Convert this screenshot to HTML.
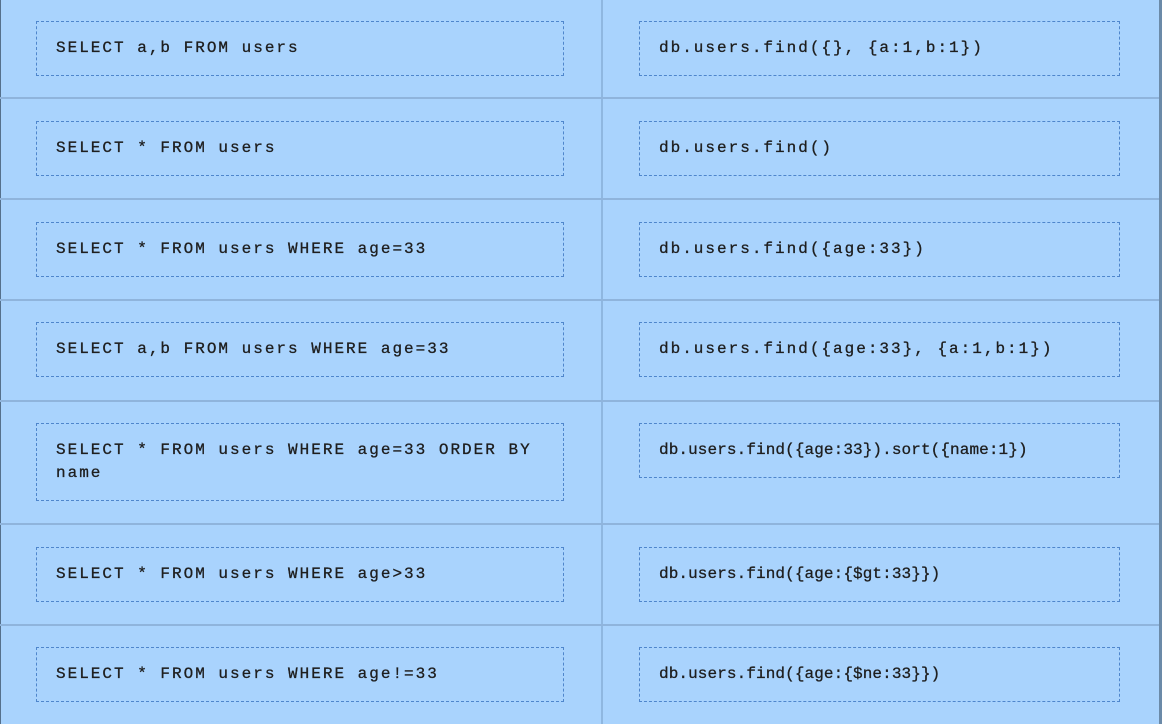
<!DOCTYPE html>
<html><head><meta charset="utf-8"><style>
html,body{margin:0;padding:0;}
body{width:1162px;height:724px;overflow:hidden;background:#a9d3fd;position:relative;font-family:"Liberation Mono","Courier New",monospace;}
.edgeL{position:absolute;left:0;top:0;width:1px;height:724px;background:#55708c;}
.edgeR{position:absolute;left:1159px;top:0;width:3px;height:724px;background:#6b8aa8;}
.col{position:absolute;left:601px;top:0;width:2px;height:724px;background:#8fb7e0;}
.hr{position:absolute;left:0;width:1159px;height:2px;background:#8fb4dc;}
.box{position:absolute;border:1px dashed #4f86cc;box-sizing:border-box;font-size:16px;color:#1e1e1e;letter-spacing:2px;line-height:23px;padding-left:19px;display:flex;align-items:center;-webkit-text-stroke:0.3px #1e1e1e;}
.l{left:36px;width:528px;}
.r{left:639px;width:481px;}
.c{letter-spacing:0.1px;}
</style></head><body>
<div class="edgeL"></div><div class="edgeR"></div><div class="col"></div>
<div class="hr" style="top:97px"></div>
<div class="hr" style="top:198px"></div>
<div class="hr" style="top:299px"></div>
<div class="hr" style="top:400px"></div>
<div class="hr" style="top:523px"></div>
<div class="hr" style="top:624px"></div>

<div class="box l" style="top:21px;height:55px">SELECT a,b FROM users</div>
<div class="box r" style="top:21px;height:55px">db.users.find({}, {a:1,b:1})</div>

<div class="box l" style="top:121px;height:55px">SELECT * FROM users</div>
<div class="box r" style="top:121px;height:55px">db.users.find()</div>

<div class="box l" style="top:222px;height:55px">SELECT * FROM users WHERE age=33</div>
<div class="box r" style="top:222px;height:55px">db.users.find({age:33})</div>

<div class="box l" style="top:322px;height:55px">SELECT a,b FROM users WHERE age=33</div>
<div class="box r" style="top:322px;height:55px">db.users.find({age:33}, {a:1,b:1})</div>

<div class="box l" style="top:423px;height:78px">SELECT * FROM users WHERE age=33 ORDER BY<br>name</div>
<div class="box r c" style="top:423px;height:55px">db.users.find({age:33}).sort({name:1})</div>

<div class="box l" style="top:547px;height:55px">SELECT * FROM users WHERE age&gt;33</div>
<div class="box r c" style="top:547px;height:55px">db.users.find({age:{$gt:33}})</div>

<div class="box l" style="top:647px;height:55px">SELECT * FROM users WHERE age!=33</div>
<div class="box r c" style="top:647px;height:55px">db.users.find({age:{$ne:33}})</div>
</body></html>
